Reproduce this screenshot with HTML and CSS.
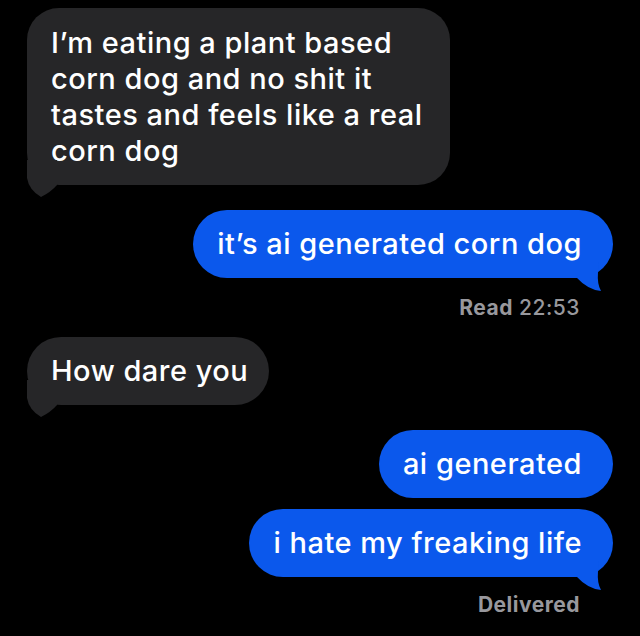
FILE: index.html
```html
<!DOCTYPE html>
<html lang="en">
<head>
    <meta charset="UTF-8">
    <meta name="viewport" content="width=device-width, initial-scale=1.0">
    <title>Messages</title>
    <link rel="stylesheet" href="styles.css">
</head>
<body>

    <div class="thread">
        <!-- incoming -->
        <div class="bubble in first">
            I’m eating a plant based corn dog and no shit it tastes and feels like a real corn dog
            <svg class="tail" viewBox="0 0 40 40" width="40" height="40"><path d="M0 1 L0 19 Q2 31 14 38 Q24 33 30 26 L30 1 Z"/></svg>
        </div>

        <!-- outgoing -->
        <div class="bubble out gap-big">
            it’s ai generated corn dog
            <svg class="tail" viewBox="0 0 40 40" width="40" height="40"><path d="M3 10 L26 10 L25 20 Q24 32 28 39 Q15 38 3 25 Z"/></svg>
        </div>
        <div class="status read"><b>Read</b> 22:53</div>

        <div class="bubble in after-status">
            How dare you
            <svg class="tail" viewBox="0 0 40 40" width="40" height="40"><path d="M0 1 L0 19 Q2 31 14 38 Q24 33 30 26 L30 1 Z"/></svg>
        </div>

        <div class="bubble out gap-big">ai generated</div>
        <div class="bubble out gap-small">
            i hate my freaking life
            <svg class="tail" viewBox="0 0 40 40" width="40" height="40"><path d="M3 10 L26 10 L25 20 Q24 32 28 39 Q15 38 3 25 Z"/></svg>
        </div>
        <div class="status delivered"><b>Delivered</b></div>
    </div>

</body>
</html>
```

FILE: styles.css
```css
/* Page */
body {
    margin: 0;
    background-color: #000;
    font-family: Inter, "Noto Sans", sans-serif;
    color: #fff;
}

/* Conversation column */
.thread {
    display: flex;
    flex-direction: column;
    padding: 8px 27px 0 27px;
}

/* Message bubbles */
.bubble {
    position: relative;
    font-size: 29px;
    font-weight: 500;
    letter-spacing: 0.5px;
    line-height: 36px;
    padding: 16px 21px 16px 24px;
    border-radius: 34px;
    max-width: 378px;
}

.bubble .tail {
    position: absolute;
    bottom: -14px;
}

.in {
    align-self: flex-start;
    background-color: #262628;
}

.in .tail {
    left: 0;
    fill: #262628;
}

.in.first {
    border-radius: 32px;
    padding-top: 17px;
}

.out {
    align-self: flex-end;
    background-color: #0b58ec;
    padding-right: 31px;
}

.out .tail {
    right: 0;
    fill: #0b58ec;
}

.gap-big {
    margin-top: 25px;
}

.gap-small {
    margin-top: 11px;
}

.after-status {
    margin-top: 17px;
}

/* Read / Delivered labels */
.status {
    align-self: flex-end;
    margin-right: 33px;
    font-size: 21px;
    font-weight: 500;
    letter-spacing: 0.5px;
    line-height: 24px;
    color: #98989d;
}

.status b {
    font-weight: 700;
}

.read {
    margin-top: 18px;
}

.delivered {
    margin-top: 16px;
}
```
